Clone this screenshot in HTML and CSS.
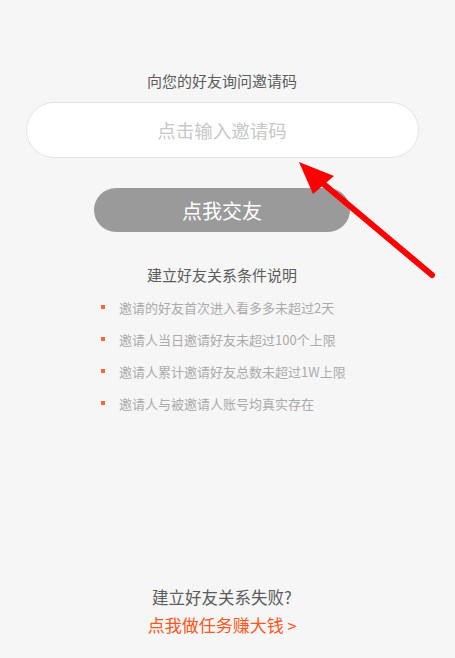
FILE: index.html
```html
<!DOCTYPE html>
<html lang="zh-CN">
<head>
<meta charset="utf-8">
<title>邀请码</title>
<link rel="stylesheet" href="styles.css">
</head>
<body>
<div class="page">
  <div class="ask">向您的好友询问邀请码</div>
  <div class="code-input">点击输入邀请码</div>
  <div class="btn">点我交友</div>
  <div class="cond-title">建立好友关系条件说明</div>
  <ul class="cond-list">
    <li>邀请的好友首次进入看多多未超过2天</li>
    <li>邀请人当日邀请好友未超过100个上限</li>
    <li>邀请人累计邀请好友总数未超过1W上限</li>
    <li>邀请人与被邀请人账号均真实存在</li>
  </ul>
  <div class="footer">
    <div class="fail">建立好友关系失败?</div>
    <div class="task">点我做任务赚大钱 <span class="chev">&gt;</span></div>
  </div>
  <svg class="arrow" width="455" height="658" viewBox="0 0 455 658">
    <line x1="432" y1="275" x2="320" y2="181" stroke="#ff0000" stroke-width="6" stroke-linecap="round"/>
    <polygon points="299,162 313,194 334,176" fill="#ff0000"/>
  </svg>
</div>
</body>
</html>
```
FILE: styles.css
```css
* { box-sizing: border-box; }
html, body { margin: 0; padding: 0; background: #f6f6f6; }
body { font-family: "Noto Sans CJK SC", "Noto Sans", sans-serif; }
.page {
  position: relative;
  width: 455px;
  height: 658px;
  display: flex;
  flex-direction: column;
  align-items: center;
  padding: 71px 11px 19px 0;
  overflow: hidden;
}
.ask {
  font-size: 15px;
  line-height: 20px;
  color: #5c5c5c;
}
.code-input {
  margin-top: 11px;
  width: 393px;
  height: 56px;
  background: #fff;
  border: 1px solid #e4e4e4;
  border-radius: 28px;
  display: flex;
  align-items: center;
  justify-content: center;
  font-size: 18.5px;
  color: #c8c8c8;
}
.btn {
  margin-top: 30px;
  width: 256px;
  height: 44px;
  border-radius: 22px;
  background: #9a9a9a;
  color: #fff;
  font-size: 20px;
  display: flex;
  align-items: center;
  justify-content: center;
}
.cond-title {
  margin-top: 33px;
  font-size: 15px;
  line-height: 20px;
  color: #5c5c5c;
}
.cond-list {
  list-style: none;
  margin: 6px 0 0 0;
  padding: 0 0 0 101px;
  align-self: stretch;
}
.cond-list li {
  display: flex;
  align-items: center;
  height: 32px;
  font-size: 13px;
  color: #ababab;
}
.cond-list li::before {
  content: "";
  width: 4px;
  height: 4px;
  background: #ff6a2b;
  margin-right: 14px;
  flex: none;
}
.footer {
  margin-top: auto;
  display: flex;
  flex-direction: column;
  align-items: center;
}
.fail {
  font-size: 16.5px;
  line-height: 28px;
  color: #5c5c5c;
}
.task {
  font-size: 17px;
  line-height: 28px;
  color: #ff5722;
}
.chev { font-size: 16px; }
.arrow {
  position: absolute;
  left: 0;
  top: 0;
  pointer-events: none;
}
```
